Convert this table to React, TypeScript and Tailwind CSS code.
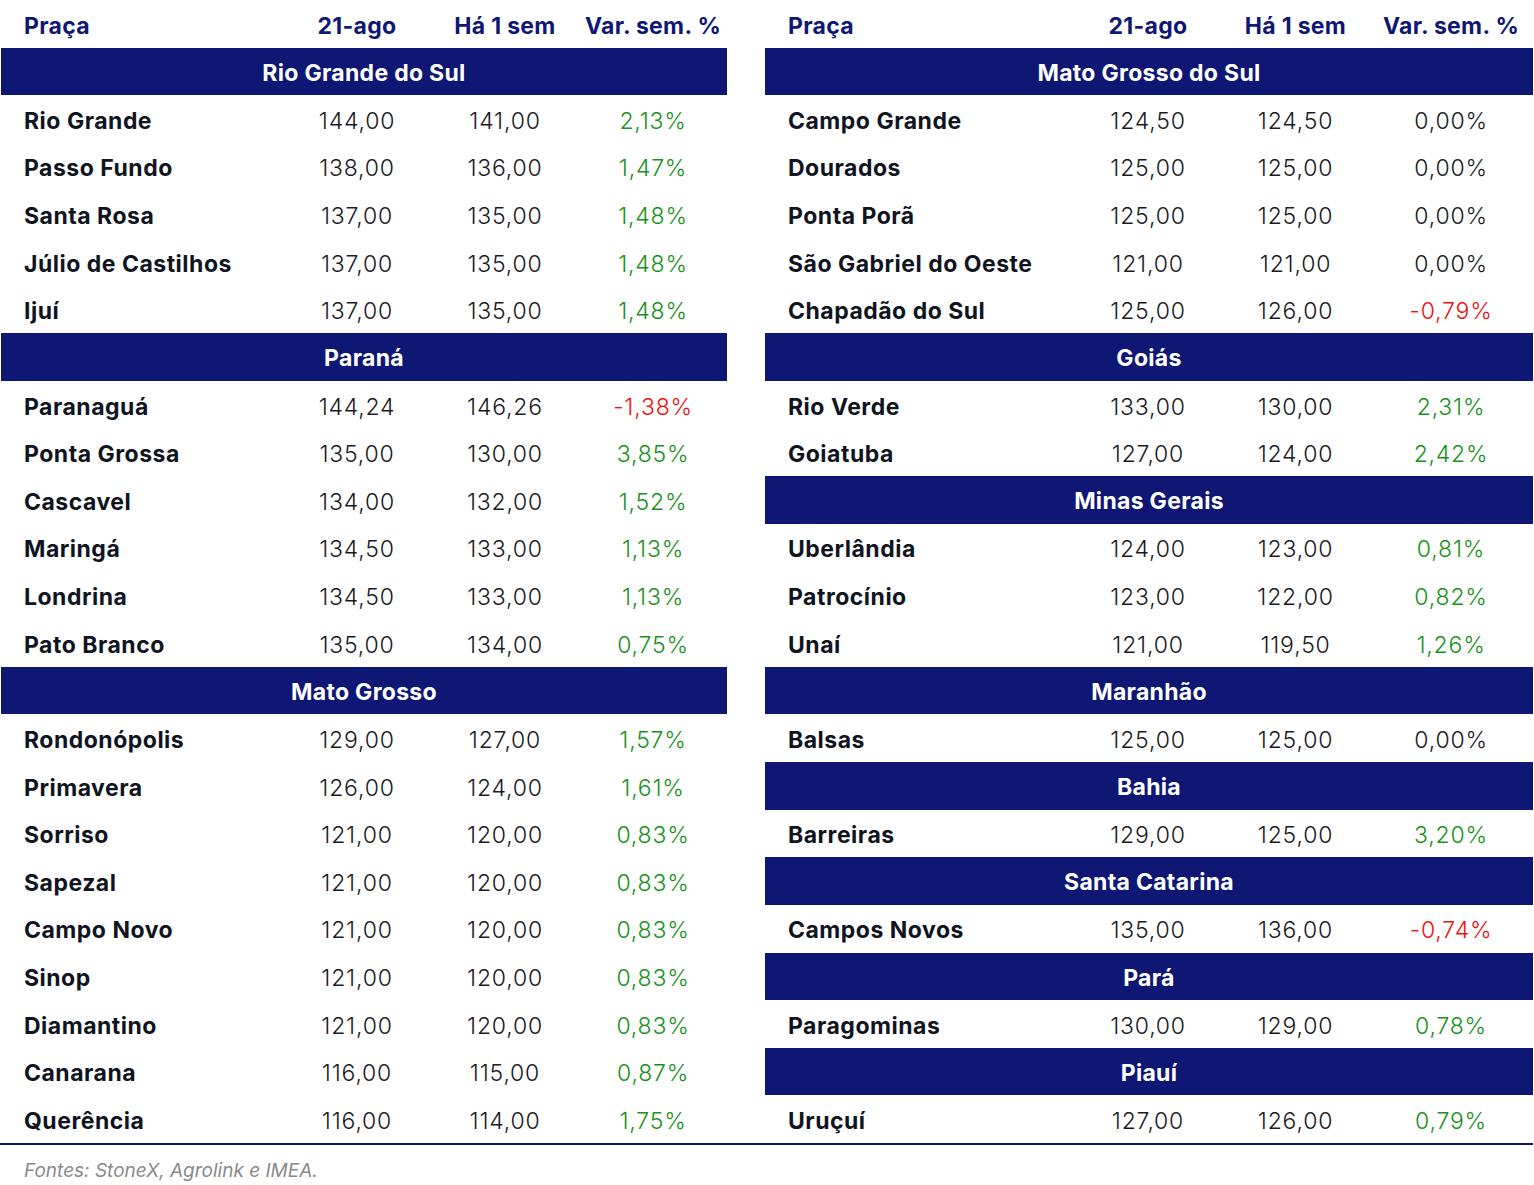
import React from "react";

type Row = { kind: "band"; title: string } | { kind: "row"; name: string; a: string; b: string; v: string };

const band = (title: string): Row => ({ kind: "band", title });
const r = (name: string, a: string, b: string, v: string): Row => ({ kind: "row", name, a, b, v });

const left: Row[] = [
  band("Rio Grande do Sul"),
  r("Rio Grande", "144,00", "141,00", "2,13%"),
  r("Passo Fundo", "138,00", "136,00", "1,47%"),
  r("Santa Rosa", "137,00", "135,00", "1,48%"),
  r("Júlio de Castilhos", "137,00", "135,00", "1,48%"),
  r("Ijuí", "137,00", "135,00", "1,48%"),
  band("Paraná"),
  r("Paranaguá", "144,24", "146,26", "-1,38%"),
  r("Ponta Grossa", "135,00", "130,00", "3,85%"),
  r("Cascavel", "134,00", "132,00", "1,52%"),
  r("Maringá", "134,50", "133,00", "1,13%"),
  r("Londrina", "134,50", "133,00", "1,13%"),
  r("Pato Branco", "135,00", "134,00", "0,75%"),
  band("Mato Grosso"),
  r("Rondonópolis", "129,00", "127,00", "1,57%"),
  r("Primavera", "126,00", "124,00", "1,61%"),
  r("Sorriso", "121,00", "120,00", "0,83%"),
  r("Sapezal", "121,00", "120,00", "0,83%"),
  r("Campo Novo", "121,00", "120,00", "0,83%"),
  r("Sinop", "121,00", "120,00", "0,83%"),
  r("Diamantino", "121,00", "120,00", "0,83%"),
  r("Canarana", "116,00", "115,00", "0,87%"),
  r("Querência", "116,00", "114,00", "1,75%"),
];

const right: Row[] = [
  band("Mato Grosso do Sul"),
  r("Campo Grande", "124,50", "124,50", "0,00%"),
  r("Dourados", "125,00", "125,00", "0,00%"),
  r("Ponta Porã", "125,00", "125,00", "0,00%"),
  r("São Gabriel do Oeste", "121,00", "121,00", "0,00%"),
  r("Chapadão do Sul", "125,00", "126,00", "-0,79%"),
  band("Goiás"),
  r("Rio Verde", "133,00", "130,00", "2,31%"),
  r("Goiatuba", "127,00", "124,00", "2,42%"),
  band("Minas Gerais"),
  r("Uberlândia", "124,00", "123,00", "0,81%"),
  r("Patrocínio", "123,00", "122,00", "0,82%"),
  r("Unaí", "121,00", "119,50", "1,26%"),
  band("Maranhão"),
  r("Balsas", "125,00", "125,00", "0,00%"),
  band("Bahia"),
  r("Barreiras", "129,00", "125,00", "3,20%"),
  band("Santa Catarina"),
  r("Campos Novos", "135,00", "136,00", "-0,74%"),
  band("Pará"),
  r("Paragominas", "130,00", "129,00", "0,78%"),
  band("Piauí"),
  r("Uruçuí", "127,00", "126,00", "0,79%"),
];

function varColor(v: string) {
  if (v.startsWith("-")) return "text-[#ee1111]";
  if (v === "0,00%") return "text-[#1a1a24]";
  return "text-[#17921a]";
}

function Table({ rows, cols }: { rows: Row[]; cols: string }) {
  return (
    <div className="flex flex-col">
      <div className={`grid ${cols} h-[47.625px] items-center text-[23px] font-bold tracking-[0.3px] text-[#0f1774] pt-[5px]`}>
        <div className="pl-[23px]">Praça</div>
        <div className="text-center">21-ago</div>
        <div className="text-center">Há 1 sem</div>
        <div className="text-center">Var. sem. %</div>
      </div>
      {rows.map((row, i) =>
        row.kind === "band" ? (
          <div
            key={i}
            className="h-[47.625px] bg-[#0f1774] flex items-center justify-center pt-[3px] text-white text-[23px] font-bold tracking-[0.3px]"
          >
            {row.title}
          </div>
        ) : (
          <div key={i} className={`grid ${cols} h-[47.625px] items-center pt-[4px] text-[23px]`}>
            <div className="pl-[23px] font-bold tracking-[0.5px] text-[#10141f]">{row.name}</div>
            <div className="text-center font-light tracking-[0.8px] text-[#1a1a24]">{row.a}</div>
            <div className="text-center font-light tracking-[0.8px] text-[#1a1a24]">{row.b}</div>
            <div className={`text-center font-light tracking-[0.8px] ${varColor(row.v)}`}>{row.v}</div>
          </div>
        )
      )}
    </div>
  );
}

export default function App() {
  return (
    <div
      className="w-[1534px] h-[1185px] bg-white"
      style={{ fontFamily: "Inter, 'Noto Sans', sans-serif" }}
    >
      <div className="flex border-b-2 border-[#0f1774] w-[1533px]">
        <div className="w-[727px] pl-px">
          <Table rows={left} cols="grid-cols-[282px_148px_148px_148px]" />
        </div>
        <div className="w-[38px]" />
        <div className="w-[768px]">
          <Table rows={right} cols="grid-cols-[309px_148px_147px_164px]" />
        </div>
      </div>
      <div className="pl-[24px] pt-[12px] text-[19px] italic text-[#8a8a8a]">
        Fontes: StoneX, Agrolink e IMEA.
      </div>
    </div>
  );
}
